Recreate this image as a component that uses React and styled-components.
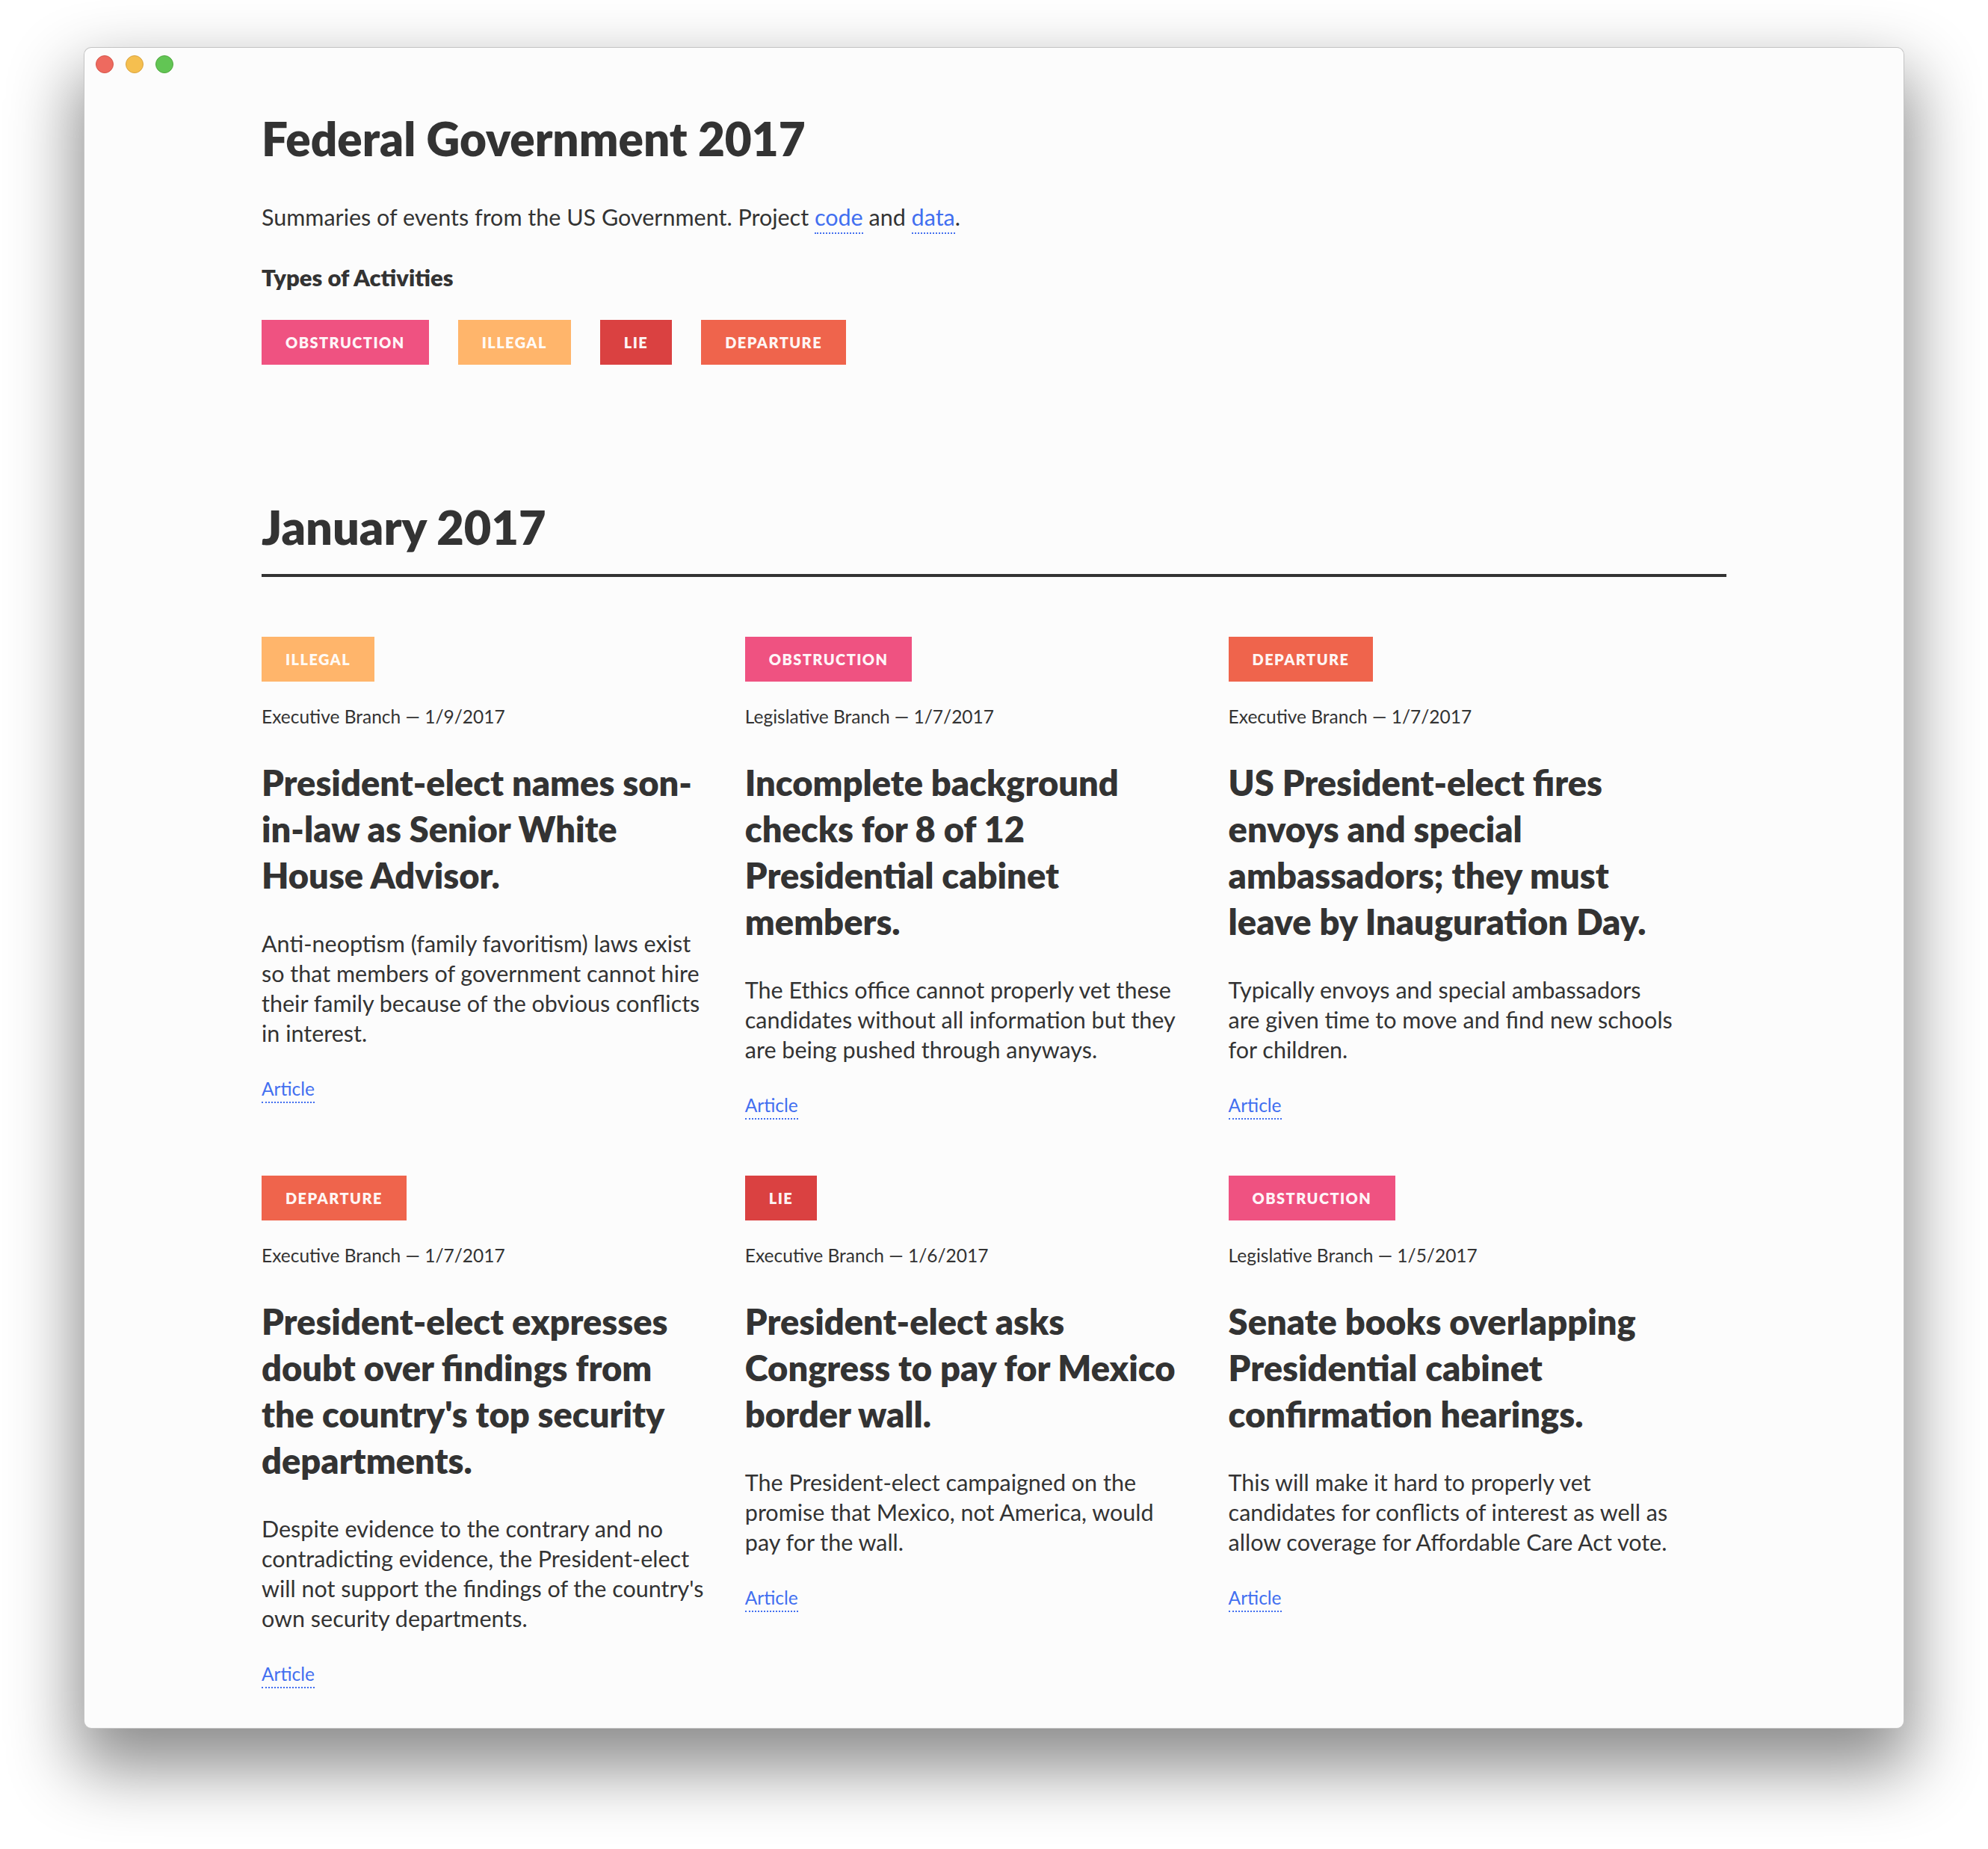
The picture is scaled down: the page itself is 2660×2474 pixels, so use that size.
import React from "react";
import styled, { createGlobalStyle } from "styled-components";

const GlobalStyle = createGlobalStyle`
  html, body {
    margin: 0;
    padding: 0;
    background: #ffffff;
  }
  body {
    font-family: "Lato", "Liberation Sans", sans-serif;
    color: #333333;
    -webkit-font-smoothing: antialiased;
  }
  * { box-sizing: border-box; }
`;

const TAG_COLORS = {
  obstruction: "#EF5281",
  illegal: "#FFB56B",
  lie: "#DA4141",
  departure: "#EF644C",
};

const Page = styled.div`
  padding-top: 63px;
  height: 2474px;
  overflow: hidden;
`;

const Window = styled.div`
  width: 2436px;
  height: 2250px;
  margin: 0 auto;
  background: #fcfcfc;
  border: 1px solid rgba(0, 0, 0, 0.22);
  border-radius: 10px;
  box-shadow: 0 44px 90px 10px rgba(0, 0, 0, 0.45);
  overflow: hidden;
`;

const TitleBar = styled.div`
  display: flex;
  gap: 16px;
  padding: 10px 15px 0;
  height: 34px;
`;

const Light = styled.span`
  width: 24px;
  height: 24px;
  border-radius: 50%;
  background: ${(p) => p.$fill};
  border: 1px solid ${(p) => p.$edge};
`;

const Content = styled.main`
  width: 1960px;
  margin: 0 auto;
`;

const Title = styled.h1`
  margin: 48.8px 0 0;
  font-size: 62px;
  line-height: 76px;
  font-weight: 800;
  color: #333;
`;

const Lead = styled.p`
  margin: 46.8px 0 0;
  font-size: 30.5px;
  line-height: 40px;
`;

const Link = styled.a`
  color: #426ff0;
  text-decoration: none;
  padding-bottom: 3px;
  border-bottom: 2px dotted #426ff0;
`;

const Subhead = styled.h4`
  margin: 43.1px 0 0;
  font-size: 31px;
  line-height: 36px;
  font-weight: 800;
`;

const TagRow = styled.div`
  display: flex;
  gap: 39px;
  margin-top: 39px;
`;

const Tag = styled.span`
  display: inline-block;
  height: 60px;
  line-height: 60px;
  padding: 0 32px;
  background: ${(p) => TAG_COLORS[p.$kind]};
  color: rgba(255, 255, 255, 0.96);
  font-size: 20px;
  font-weight: 800;
  letter-spacing: 1.4px;
  text-transform: uppercase;
`;

const MonthHeading = styled.h2`
  margin: 179.6px 0 0;
  padding-bottom: 24.4px;
  border-bottom: 4px solid #333;
  font-size: 63px;
  line-height: 76px;
  font-weight: 800;
`;

const Grid = styled.section`
  display: grid;
  grid-template-columns: repeat(3, 33%);
  row-gap: 75.5px;
  align-items: start;
  margin-top: 80px;
`;

const Card = styled.article`
  padding-right: 48.8px;
`;

const Meta = styled.div`
  margin-top: 29.5px;
  font-size: 24.5px;
  line-height: 36px;
`;

const Headline = styled.h3`
  margin: 38.8px 0 0;
  font-size: 47px;
  line-height: 62px;
  font-weight: 800;
`;

const Body = styled.p`
  margin: 40.4px 0 0;
  font-size: 30.5px;
  line-height: 40px;
`;

const Footer = styled.div`
  margin-top: 36.8px;
  font-size: 24.5px;
  line-height: 36px;
`;

const TYPES = ["obstruction", "illegal", "lie", "departure"];

const EVENTS = [
  {
    kind: "illegal",
    branch: "Executive Branch",
    date: "1/9/2017",
    title: "President-elect names son-in-law as Senior White House Advisor.",
    body: "Anti-neoptism (family favoritism) laws exist so that members of government cannot hire their family because of the obvious conflicts in interest.",
  },
  {
    kind: "obstruction",
    branch: "Legislative Branch",
    date: "1/7/2017",
    title: "Incomplete background checks for 8 of 12 Presidential cabinet members.",
    body: "The Ethics office cannot properly vet these candidates without all information but they are being pushed through anyways.",
  },
  {
    kind: "departure",
    branch: "Executive Branch",
    date: "1/7/2017",
    title: "US President-elect fires envoys and special ambassadors; they must leave by Inauguration Day.",
    body: "Typically envoys and special ambassadors are given time to move and find new schools for children.",
  },
  {
    kind: "departure",
    branch: "Executive Branch",
    date: "1/7/2017",
    title: "President-elect expresses doubt over findings from the country's top security departments.",
    body: "Despite evidence to the contrary and no contradicting evidence, the President-elect will not support the findings of the country's own security departments.",
  },
  {
    kind: "lie",
    branch: "Executive Branch",
    date: "1/6/2017",
    title: "President-elect asks Congress to pay for Mexico border wall.",
    body: "The President-elect campaigned on the promise that Mexico, not America, would pay for the wall.",
  },
  {
    kind: "obstruction",
    branch: "Legislative Branch",
    date: "1/5/2017",
    title: "Senate books overlapping Presidential cabinet confirmation hearings.",
    body: "This will make it hard to properly vet candidates for conflicts of interest as well as allow coverage for Affordable Care Act vote.",
  },
];

export default function App() {
  return (
    <Page>
      <GlobalStyle />
      <Window>
        <TitleBar>
          <Light $fill="#ee6a5f" $edge="#d5554a" />
          <Light $fill="#f5bf4f" $edge="#d9a33e" />
          <Light $fill="#62c554" $edge="#50a83f" />
        </TitleBar>
        <Content>
          <Title>Federal Government 2017</Title>
          <Lead>
            Summaries of events from the US Government. Project <Link href="#">code</Link> and{" "}
            <Link href="#">data</Link>.
          </Lead>
          <Subhead>Types of Activities</Subhead>
          <TagRow>
            {TYPES.map((t) => (
              <Tag key={t} $kind={t}>
                {t}
              </Tag>
            ))}
          </TagRow>
          <MonthHeading>January 2017</MonthHeading>
          <Grid>
            {EVENTS.map((e, i) => (
              <Card key={i}>
                <Tag $kind={e.kind}>{e.kind}</Tag>
                <Meta>
                  {e.branch} — {e.date}
                </Meta>
                <Headline>{e.title}</Headline>
                <Body>{e.body}</Body>
                <Footer>
                  <Link href="#">Article</Link>
                </Footer>
              </Card>
            ))}
          </Grid>
        </Content>
      </Window>
    </Page>
  );
}
